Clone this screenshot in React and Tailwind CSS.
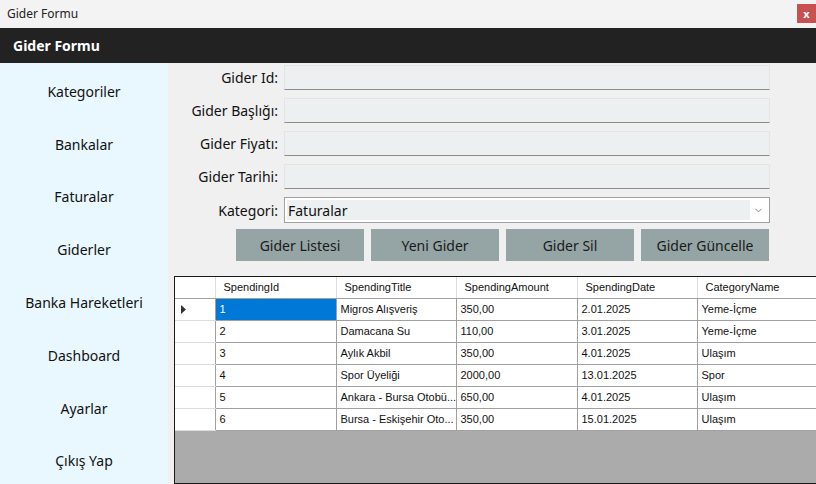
import { ChevronDown } from "lucide-react";

const menu = [
  "Kategoriler",
  "Bankalar",
  "Faturalar",
  "Giderler",
  "Banka Hareketleri",
  "Dashboard",
  "Ayarlar",
  "Çıkış Yap",
];

const fields = ["Gider Id:", "Gider Başlığı:", "Gider Fiyatı:", "Gider Tarihi:"];

const buttons = ["Gider Listesi", "Yeni Gider", "Gider Sil", "Gider Güncelle"];

const columns = ["SpendingId", "SpendingTitle", "SpendingAmount", "SpendingDate", "CategoryName"];

const rows = [
  ["1", "Migros Alışveriş", "350,00", "2.01.2025", "Yeme-İçme"],
  ["2", "Damacana Su", "110,00", "3.01.2025", "Yeme-İçme"],
  ["3", "Aylık Akbil", "350,00", "4.01.2025", "Ulaşım"],
  ["4", "Spor Üyeliği", "2000,00", "13.01.2025", "Spor"],
  ["5", "Ankara - Bursa Otobü...", "650,00", "4.01.2025", "Ulaşım"],
  ["6", "Bursa - Eskişehir Oto...", "350,00", "15.01.2025", "Ulaşım"],
];

export default function App() {
  return (
    <div className="w-[816px] h-[484px] flex flex-col overflow-hidden bg-[#f0f0f0] font-['Noto_Sans',sans-serif] text-[#111]">
      {/* window title bar */}
      <div className="h-[28px] shrink-0 bg-[#f3f3f3] flex items-center justify-between pl-[7px]">
        <span className="text-[12px] text-[#222]">Gider Formu</span>
        <div className="w-[19px] h-[19px] bg-[#c75050] text-white text-[11px] font-bold flex items-center justify-center leading-none mb-[2px]">
          x
        </div>
      </div>

      {/* dark header */}
      <div className="h-[35px] shrink-0 bg-[#222222] flex items-center pl-[13px]">
        <span className="text-white text-[14px] font-bold">Gider Formu</span>
      </div>

      <div className="flex flex-1 min-h-0">
        {/* sidebar */}
        <div className="w-[168px] shrink-0 bg-[#e8f8fe] flex flex-col pt-[2px]">
          {menu.map((m) => (
            <div key={m} className="h-[52.8px] shrink-0 flex items-center justify-center text-[14px]">
              {m}
            </div>
          ))}
        </div>

        {/* main */}
        <div className="flex-1 flex flex-col pl-[6px]">
          <div className="flex flex-col gap-[8px] pt-[2px] pr-[47px]">
            {fields.map((f) => (
              <div key={f} className="flex items-center h-[25px]">
                <div className="w-[110px] text-right text-[14px] pr-[6px]">{f}</div>
                <div className="flex-1 h-[25px] bg-[#ecf0f1] border border-[#e4e4e4] border-b-[#8c8c8c]" />
              </div>
            ))}
            <div className="flex items-center h-[26px]">
              <div className="w-[110px] text-right text-[14px] pr-[6px]">Kategori:</div>
              <div className="flex-1 h-[26px] bg-white border border-[#a0a0a0] flex items-center p-[2px]">
                <div className="flex-1 h-full bg-[#ecf0f1] flex items-center pl-[1px] text-[14px]">
                  Faturalar
                </div>
                <div className="w-[17px] flex items-center justify-center">
                  <ChevronDown className="w-[11px] h-[11px] text-[#555]" strokeWidth={1.5} />
                </div>
              </div>
            </div>
          </div>

          <div className="flex gap-[7px] mt-[6px] pl-[62px]">
            {buttons.map((b) => (
              <div key={b} className="w-[128px] h-[32px] bg-[#95a5a6] flex items-center justify-center text-[14px] text-[#1a1a1a]">
                {b}
              </div>
            ))}
          </div>

          {/* data grid */}
          <div className="mt-[15px] flex-1 bg-[#ababab] border-t border-l border-b border-[#1a1a1a] font-['Liberation_Sans',sans-serif] text-[11px] overflow-hidden">
            <table className="border-collapse bg-white table-fixed w-[641px]">
              <colgroup>
                <col className="w-[40px]" />
                <col className="w-[121px]" />
                <col className="w-[120px]" />
                <col className="w-[121px]" />
                <col className="w-[120px]" />
                <col className="w-[119px]" />
              </colgroup>
              <thead>
                <tr className="h-[21px]">
                  <th className="p-0 border-r border-[#dcdcdc] border-b border-b-[#a0a0a0]"></th>
                  {columns.map((c) => (
                    <th
                      key={c}
                      className="p-0 pl-[8px] text-left font-normal border-r border-[#dcdcdc] border-b border-b-[#a0a0a0] whitespace-nowrap overflow-hidden"
                    >
                      {c}
                    </th>
                  ))}
                </tr>
              </thead>
              <tbody>
                {rows.map((r, i) => (
                  <tr key={r[0]} className="h-[22px]">
                    <td className="p-0 border-r border-r-[#a0a0a0] border-b border-b-[#dcdcdc]">
                      {i === 0 && (
                        <svg width="6" height="9" viewBox="0 0 6 9" className="ml-[6px]">
                          <path d="M0 0 L5 4.5 L0 9 Z" fill="#333" />
                        </svg>
                      )}
                    </td>
                    {r.map((v, j) => (
                      <td
                        key={j}
                        className={`p-0 pl-[4px] border-r border-b border-[#a0a0a0] whitespace-nowrap overflow-hidden ${
                          i === 0 && j === 0 ? "bg-[#0078d7] text-white" : ""
                        }`}
                      >
                        {v}
                      </td>
                    ))}
                  </tr>
                ))}
              </tbody>
            </table>
          </div>
        </div>
      </div>
    </div>
  );
}
